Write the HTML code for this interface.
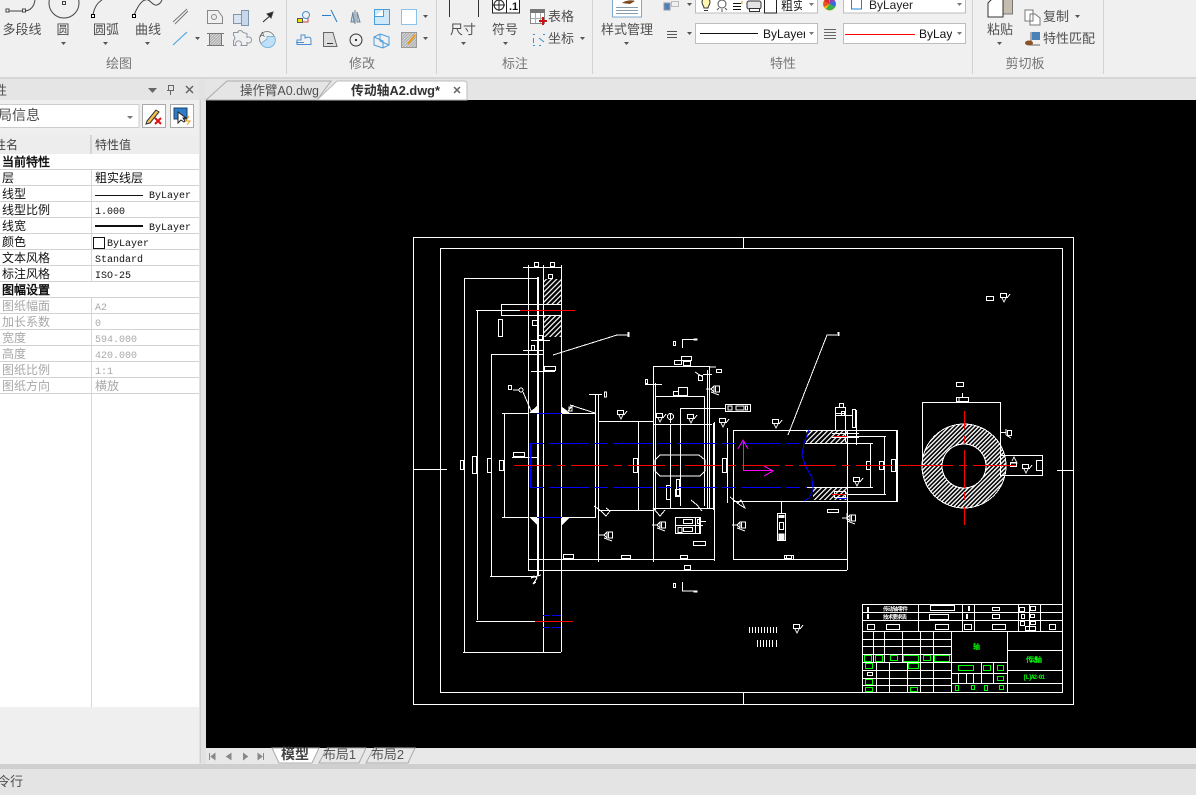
<!DOCTYPE html>
<html><head><meta charset="utf-8"><title>CAD</title>
<style>
html,body{margin:0;padding:0;background:#f0f0f0;width:1196px;height:795px;overflow:hidden}
svg{position:absolute;left:0;top:0;display:block}
.u{font-family:"Liberation Sans","Noto Sans CJK SC",sans-serif;font-size:13px;fill:#4f4f4f}
.g{font-family:"Liberation Sans","Noto Sans CJK SC",sans-serif;font-size:13px;fill:#767676}
.t{font-family:"Liberation Mono","WenQuanYi Zen Hei",monospace;font-size:12px;fill:#111}
.l{font-family:"Liberation Mono",monospace;font-size:10px;fill:#111}
.d{fill:#a8a8a8}
.c{text-anchor:middle}
</style></head><body>
<svg width="1196" height="795" viewBox="0 0 1196 795" xmlns="http://www.w3.org/2000/svg">
<defs>
<pattern id="h" width="3.6" height="3.6" patternUnits="userSpaceOnUse" patternTransform="rotate(-45)"><rect width="3.6" height="1.2" fill="#fff"/></pattern>
<pattern id="h2" width="3" height="3" patternUnits="userSpaceOnUse" patternTransform="rotate(-45)"><rect width="3" height="1.4" fill="#fff"/></pattern>
<pattern id="gh" width="2" height="2" patternUnits="userSpaceOnUse" patternTransform="rotate(-45)"><rect width="2" height="2" fill="#d8d8d8"/><rect width="2" height="1" fill="#aaa"/></pattern>
<g id="r" fill="none" stroke="#fff"><rect x="-4.500" y="-5.500" width="6" height="4"/><path d="M-3-1L-1 3L1-1M2-1L5-5"/></g>
<g id="s" fill="none" stroke="#fff"><path d="M-8 0H-3L0-3V3L-3 0M-3 3L5 6"/><rect x="1.500" y="-3" width="4" height="6"/></g>
</defs>
<!-- chrome backgrounds -->
<rect width="1196" height="77" fill="#f0f0f0"/>
<rect y="77" width="1196" height="2" fill="#d6d6d6"/>
<rect y="79" width="1196" height="686" fill="#e5e5e5"/>
<rect x="0" y="100" width="199" height="665" fill="#efefef"/>
<rect x="199" y="79" width="7" height="686" fill="#e2e2e2"/>
<rect x="200" y="100" width="1" height="663" fill="#d0d0d0"/>
<rect x="206" y="100" width="990" height="648" fill="#000"/>
<rect x="206" y="748" width="990" height="16" fill="#e8e8e8"/>
<rect y="764" width="1196" height="5" fill="#cfcfcf"/>
<rect y="769" width="1196" height="26" fill="#e4e4e4"/>
<text x="-3" y="786" class="u">令行</text>

<!-- ribbon separators -->
<g fill="#d2d2d2"><rect x="286" width="1" height="74"/><rect x="436" width="1" height="74"/><rect x="592" width="1" height="74"/><rect x="972" width="1" height="74"/><rect x="1103" width="1" height="74"/></g>

<!-- ribbon selects -->
<g fill="#fff" stroke="#bdbdbd"><rect x="695.500" y="-3" width="122" height="16"/><rect x="843.500" y="-3" width="122" height="16"/><rect x="695.500" y="23.500" width="122" height="20"/><rect x="843.500" y="23.500" width="122" height="20"/></g>

<!-- ribbon labels -->
<text x="119" y="68" class="g c">绘图</text><text x="362" y="68" class="g c">修改</text><text x="515" y="68" class="g c">标注</text><text x="783" y="68" class="g c">特性</text><text x="1025" y="68" class="g c">剪切板</text>
<text x="22" y="34" class="u c">多段线</text><text x="63" y="34" class="u c">圆</text><text x="106" y="34" class="u c">圆弧</text><text x="148" y="34" class="u c">曲线</text>
<text x="463" y="34" class="u c">尺寸</text><text x="505" y="34" class="u c">符号</text><text x="561" y="21" class="u c">表格</text><text x="561" y="43" class="u c">坐标</text>
<text x="627" y="34" class="u c">样式管理</text><text x="1000" y="34" class="u c">粘贴</text><text x="1056" y="21" class="u c">复制</text><text x="1069" y="43" class="u c">特性匹配</text>

<!-- ribbon arrows -->
<path fill="#555" d="M61 42h5l-2.500 3zM103 42h5l-2.500 3zM145 42h5l-2.500 3zM461 42h5l-2.500 3zM503 42h5l-2.500 3zM624 42h5l-2.500 3zM997 42h5l-2.500 3zM195 37h5l-2.500 3zM423 15h5l-2.500 3zM423 37h5l-2.500 3zM580 37h5l-2.500 3zM687 3h5l-2.500 3zM687 32h5l-2.500 3zM1075 15h5l-2.500 3z"/>
<path fill="#777" d="M809 32h5l-2.500 3zM809 3h5l-2.500 3zM957 32h5l-2.500 3zM957 3h5l-2.500 3z"/>

<!-- draw icons -->
<g fill="none" stroke="#444" stroke-width="1">
<path d="M8 11H24C30 11 34 7 35 0"/><rect x="6" y="9" width="3" height="3" fill="#fff"/><rect x="22.500" y="9" width="3" height="3" fill="#fff"/>
<circle cx="64" cy="3" r="15"/><rect x="62.500" y="1.500" width="3" height="3"/>
<path d="M93 15C94 9 97 3 102 0"/><rect x="91.500" y="14.500" width="3" height="3" stroke="#000" fill="#fff"/>
<path d="M134 15C137 8 141 1 145 0C150-2 152 6 157 5C160 4 161 2 162 0"/><rect x="132.500" y="14.500" width="3" height="3" stroke="#000" fill="#fff"/>
<path d="M173 22L187 9M175 24L188 11" stroke="#777"/>
<path d="M173 45L187 32" stroke="#3a9fe0"/>
<path d="M207.500 10.500H218L222.500 17V23.500H207.500Z" stroke="#888"/><circle cx="214" cy="17" r="2.500" stroke="#888"/>
<path d="M233.500 14.500H241.500V23.500H233.500Z" stroke="#7f96ad" fill="#d8e4f0"/><path d="M241.500 10.500H248.500V25.500H241.500Z" stroke="#7f96ad" fill="#c8d8ea"/>
<path d="M263 22L272 14" stroke="#222"/><path d="M267 14L273 12L271 18Z" fill="#222"/>
<rect x="209.500" y="33.500" width="12" height="12" stroke="#777" fill="url(#gh)"/>
<path d="M207 33.500H212M219 33.500H224M207 45.500H212M219 45.500H224" stroke="#777"/>
<path d="M238 31.500a3 3 0 0 1 5 1l4 1v4a3 3 0 1 1 0 5v3h-6a3 3 0 1 0-5 0h-2.500v-5a3 3 0 0 0 0-5v-3h4.500z" stroke="#8d97a3"/>
<circle cx="267" cy="39" r="7.500" stroke="#888"/><path d="M267 36.500H274.500A7.500 7.500 0 0 1 261 43.500L267 39Z" stroke="#7bb8de" fill="#bfe0f7"/>
<text x="260" y="37" style="font:7px 'Liberation Sans',sans-serif;fill:#555;stroke:none">A</text>
<!-- modify -->
<circle cx="306" cy="15" r="3.500" stroke="#4a8ed0"/><rect x="297.500" y="18.500" width="5" height="4" fill="#f2e400" stroke="#555"/><path d="M303 22H308V18" stroke="#c44"/>
<path d="M322 15.500H331M331 10L337 22" stroke="#2a7bc4"/>
<path d="M355 10V24M353 12L351 22H354ZM357 12L360 22H357Z" stroke="#6b8296" fill="#c9dbe9"/>
<rect x="374.500" y="9.500" width="15" height="15" stroke="#4a9ddd" fill="#cfe9fb"/><path d="M383.500 9.500V16.500H374.500" stroke="#4a9ddd" fill="#fff"/>
<rect x="401.500" y="9.500" width="15" height="15" stroke="#8cc2ea" fill="#fff"/>
<path d="M297 44.500H311V40C311 36 307 37 305 38V35H301V40H297ZM296 42.500H304" stroke="#4a8ed0"/>
<path d="M323.500 32.500H333L337 46.500H323.500Z" stroke="#666" fill="#ddd"/><path d="M327 43.500H333" stroke="#333"/>
<circle cx="356" cy="40" r="6" stroke="#333"/><rect x="355" y="39" width="2" height="2" fill="#333" stroke="none"/>
<path d="M374 37L380 34L389 37V45L383 48L374 45ZM380 34V41L389 45M374 37L383 41V48" stroke="#4a9ddd"/>
<rect x="401.500" y="32.500" width="15" height="15" stroke="#999" fill="url(#gh)"/><path d="M408 44L415 35" stroke="#e69a1a" stroke-width="2"/>
<!-- annotations -->
<path d="M449.500 0V17M478.500 0V17" stroke="#333"/>
<rect x="492.500" y="-1" width="27" height="14" stroke="#222" fill="#fff"/><path d="M506.500 0V13" stroke="#222"/><circle cx="499" cy="5" r="5" stroke="#222"/><path d="M499-1V11M493 5H505" stroke="#222"/>
<text x="509" y="10" style="font:bold 11px 'Liberation Sans',sans-serif;fill:#111;stroke:none">.1</text>
<rect x="530.500" y="9.500" width="14" height="14" stroke="#888" fill="#fff"/><rect x="530" y="9" width="15" height="4" fill="#777" stroke="none"/><path d="M535.500 13V23M540.500 13V23M531 18.500H544" stroke="#aaa"/><path d="M539 21H547M543 17V25" stroke="#c11" stroke-width="2"/>
<path d="M533 34.500H535M543 34.500H545M533 45.500H535M539 45.500H541M533.500 38V43M539 38L544 42" stroke="#3a90d0"/>
<rect x="612.500" y="-2" width="29" height="19" stroke="#7fa8cc" fill="#fff"/><path d="M616 7.500H638M616 10.500H638M616 13.500H638" stroke="#8899aa"/><path d="M622 3C626 0 632 0 635 1L630 4Z" fill="#7a4a20" stroke="none"/>
<!-- properties -->
<path d="M667 31.500H677M667 34.500H677M667 37.500H677" stroke="#555"/>
<rect x="664" y="3" width="6" height="7" fill="#4e7fb5" stroke="#99a"/><path d="M671.500 1.500H678.500V6.500H671.500Z" stroke="#bbb"/>
<path d="M702 2A4 4 0 1 1 710 2C710 5 708 6 708 8H704C704 6 702 5 702 2ZM704 10.500H708" stroke="#333" fill="#fff6b0"/>
<circle cx="722" cy="4" r="4" stroke="#555"/><path d="M717 10L719 8M727 10L725 8M722 9V12" stroke="#555"/>
<path d="M733 3.500H741M733 6.500H741M733 9.500H741" stroke="#111"/>
<path d="M742 1V4" stroke="#c90"/>
<rect x="747" y="1" width="14" height="8" rx="2" stroke="#333" fill="#e4e4e4"/><rect x="749.500" y="8.500" width="10" height="3" stroke="#333" fill="#fff"/>
<rect x="764.500" y="-2" width="12" height="15" stroke="#222" fill="#fff"/>
<circle cx="829.500" cy="4" r="6.500" fill="#f7b81c" stroke="none"/><path d="M829.500 4L824 1A6 6 0 0 1 829 -2Z" fill="#e3262a" stroke="none"/><path d="M829.500 4L830 -2A6 6 0 0 1 835 1Z" fill="#8a3fc4" stroke="none"/><path d="M829.500 4L835 1A6 6 0 0 1 835 7Z" fill="#2a6fdc" stroke="none"/><path d="M829.500 4L824 7A6 6 0 0 1 824 1Z" fill="#e8551a" stroke="none"/><path d="M829.500 4L835 7A6 6 0 0 1 826 9Z" fill="#34b34a" stroke="none"/>
<path d="M824 29.500H836M824 32.500H836M824 35.500H836M824 38.500H836" stroke="#666"/>
<!-- clipboard -->
<rect x="1000.500" y="-3" width="12" height="17" fill="#c5bdb0" stroke="#777"/><path d="M988 3L992 -1H1003V17H988Z" fill="#fff" stroke="#333"/>
<path d="M1025 10H1033V21H1025ZM1030 14H1035L1040 18V25H1030Z" stroke="#777" fill="#fff"/>
<rect x="1032" y="32" width="8" height="8" fill="#4a82b8" stroke="none"/><path d="M1031 32V45H1040" stroke="#666"/><ellipse cx="1029" cy="43" rx="4" ry="2.500" fill="#8a5226" stroke="none"/>
</g>

<svg x="781" y="-6" width="21" height="24"><text x="0" y="16" class="u" style="font-size:12px;fill:#222">粗实线层</text></svg>
<rect x="851.500" y="-3" width="10" height="12" fill="none" stroke="#1c84d8"/>
<text x="869" y="9" class="u" style="font-size:12px;fill:#222">ByLayer</text>
<rect x="700" y="33" width="58" height="1" fill="#111"/>
<svg x="763" y="24" width="42" height="20"><text x="0" y="14" class="u" style="font-size:12px;fill:#111">ByLayer</text></svg>
<rect x="845" y="34" width="70" height="1" fill="#f00"/>
<svg x="919" y="24" width="33" height="20"><text x="0" y="14" class="u" style="font-size:12px;fill:#111">ByLayer</text></svg>

<!-- panel header -->
<text x="-6" y="95" class="u">性</text>
<path d="M148 88h9l-4.500 5z" fill="#666"/>
<path d="M168.500 85.500h5v5h-5zM167 90.500h7M170.500 90v5" fill="none" stroke="#666"/>
<path d="M186 86l7 7M193 86l-7 7" stroke="#666" stroke-width="1.500"/>
<rect x="-2" y="104.500" width="141" height="23" fill="#fff" stroke="#ccc"/>
<text x="-2" y="120" class="u" style="font-size:14px">局信息</text>
<path d="M127 116h6l-3 3z" fill="#777"/>
<rect x="142.500" y="104.500" width="23" height="23" fill="#fff" stroke="#aaa"/>
<path d="M147 121L156 110L159 112L150 123L146 124Z" fill="#f3c04c" stroke="#333"/><path d="M155 118l6 6M161 118l-6 6" stroke="#d11" stroke-width="2"/>
<rect x="170.500" y="104.500" width="23" height="23" fill="#fff" stroke="#aaa"/>
<rect x="174" y="108" width="13" height="11" fill="#2f7cc6" stroke="#14426e"/><path d="M178 112L178 123L181 120L184 122L185 121L183 118H186Z" fill="#fff" stroke="#222"/><path d="M189 116L186 121H190L187 125" stroke="#e69a1a" fill="none"/>

<!-- property table -->
<rect x="0" y="135" width="199" height="572" fill="#fff"/>
<rect x="0" y="135" width="199" height="19" fill="#ededed"/>
<rect x="90" y="135" width="2" height="19" fill="#d5d5d5"/>
<rect x="91" y="154" width="1" height="553" fill="#d8d8d8"/>
<g fill="#d2d2d2"><rect y="169" width="199" height="1"/><rect y="185" width="199" height="1"/><rect y="201" width="199" height="1"/><rect y="217" width="199" height="1"/><rect y="233" width="199" height="1"/><rect y="249" width="199" height="1"/><rect y="265" width="199" height="1"/><rect y="281" width="199" height="1"/><rect y="297" width="199" height="1"/><rect y="313" width="199" height="1"/><rect y="329" width="199" height="1"/><rect y="345" width="199" height="1"/><rect y="361" width="199" height="1"/><rect y="377" width="199" height="1"/><rect y="393" width="199" height="1"/></g>
<rect x="91" y="154" width="108" height="15" fill="#fff"/>
<rect x="91" y="282" width="108" height="15" fill="#fff"/>
<text x="-6" y="149" class="t" style="fill:#444">性名</text><text x="95" y="149" class="t" style="fill:#444">特性值</text>
<text x="2" y="166" class="t" style="font-weight:bold">当前特性</text>
<text x="2" y="182" class="t">层</text><text x="95" y="182" class="t">粗实线层</text>
<text x="2" y="198" class="t">线型</text><rect x="95" y="195" width="48" height="1" fill="#111"/><text x="149" y="198" class="l">ByLayer</text>
<text x="2" y="214" class="t">线型比例</text><text x="95" y="214" class="l">1.000</text>
<text x="2" y="230" class="t">线宽</text><rect x="95" y="225" width="48" height="2" fill="#111"/><text x="149" y="230" class="l">ByLayer</text>
<text x="2" y="246" class="t">颜色</text><rect x="93.500" y="237.500" width="11" height="11" fill="#fff" stroke="#111"/><text x="107" y="246" class="l">ByLayer</text>
<text x="2" y="262" class="t">文本风格</text><text x="95" y="262" class="l">Standard</text>
<text x="2" y="278" class="t">标注风格</text><text x="95" y="278" class="l">ISO-25</text>
<text x="2" y="294" class="t" style="font-weight:bold">图幅设置</text>
<text x="2" y="310" class="t d">图纸幅面</text><text x="95" y="310" class="l d">A2</text>
<text x="2" y="326" class="t d">加长系数</text><text x="95" y="326" class="l d">0</text>
<text x="2" y="342" class="t d">宽度</text><text x="95" y="342" class="l d">594.000</text>
<text x="2" y="358" class="t d">高度</text><text x="95" y="358" class="l d">420.000</text>
<text x="2" y="374" class="t d">图纸比例</text><text x="95" y="374" class="l d">1:1</text>
<text x="2" y="390" class="t d">图纸方向</text><text x="95" y="390" class="t d">横放</text>

<!-- doc tabs -->
<path d="M206 100L227 81H331L317 100Z" fill="#e5e5e5" stroke="#aaa"/>
<path d="M317 100L337 81H464Q467 81 467 84V100Z" fill="#fff" stroke="#bbb"/>
<text x="240" y="95" class="u" textLength="79" lengthAdjust="spacingAndGlyphs">操作臂A0.dwg</text>
<text x="351" y="95" class="u" style="font-weight:bold;fill:#333" textLength="89" lengthAdjust="spacingAndGlyphs">传动轴A2.dwg*</text>
<path d="M454 87l6 6M460 87l-6 6" stroke="#666" stroke-width="1.500"/>

<!-- layout tabs -->
<path d="M272 748L279 763H312L319 748Z" fill="#fff" stroke="#aaa"/>
<path d="M319 763L327 748H366L359 763ZM366 763L374 748H415L408 763Z" fill="#e8e8e8" stroke="#aaa"/>
<text x="295" y="759" class="u c" style="font-weight:bold;fill:#444;font-size:14px">模型</text>
<text x="339.500" y="759" class="u c" style="fill:#555" textLength="33" lengthAdjust="spacingAndGlyphs">布局1</text>
<text x="387.500" y="759" class="u c" style="fill:#555" textLength="33" lengthAdjust="spacingAndGlyphs">布局2</text>
<path d="M209.500 753V760M215 753.500L211 756.500L215 759.500ZM231 753.500L226.500 756.500L231 759.500ZM243.500 753.500L247.500 756.500L243.500 759.500ZM258 753.500L262 756.500L258 759.500ZM263.500 753V760" fill="#888" stroke="#888"/>

<!-- DRAWING -->
<g shape-rendering="crispEdges">
<rect x="543" y="279" width="18" height="25" fill="url(#h)"/><rect x="543" y="316" width="18" height="21" fill="url(#h)"/>
<rect x="806" y="431" width="41" height="12" fill="url(#h)"/><rect x="813" y="488" width="34" height="12" fill="url(#h)"/>
<path fill-rule="evenodd" fill="url(#h2)" d="M922 466a42 42 0 1 0 84 0a42 42 0 1 0-84 0ZM942 466a22 22 0 1 1 44 0a22 22 0 1 1-44 0Z"/>

<g fill="none" stroke="#fff" stroke-width="1">
<rect x="413.500" y="237.500" width="660" height="467"/><rect x="440.500" y="248.500" width="622" height="444"/>
<path d="M743.500 237V248M743.500 692V704M413 469.500H447M1057 470.500H1073"/>
<!-- left section -->
<path d="M528.500 265V570M543.500 265V652M561.500 265V652M523 267.500H561M464.500 278V652M464 278.500H539M463 652.500H561M477.500 311V620M476 310.500H520M476 621.500H535"/>
<path d="M491.500 354V576M491 354.500H543M490 576.500H535M504.500 413V517M502 413.500H528M561 413.500H596M502 517.500H528M561 517.500H596"/>
<path d="M501 304.500H561M501 315.500H561M501.500 304V315"/>
<rect x="498.500" y="319.500" width="4" height="17"/>
<path d="M531 340.500H550M523 350.500H543M531 371.500H555"/>
<rect x="544.500" y="366.500" width="11" height="4"/><rect x="534.500" y="262.500" width="4" height="4"/><rect x="550.500" y="262.500" width="4" height="4"/><rect x="548.500" y="274.500" width="4" height="4"/><rect x="538.500" y="335.500" width="4" height="4"/><rect x="531.500" y="345.500" width="3" height="5"/><rect x="532.500" y="320.500" width="5" height="5"/>
<path d="M553 355L617 335H628"/><path d="M628.500 332V337" stroke-width="2"/>
<circle cx="521" cy="390" r="2"/><path d="M513 390H519M523 392L532 413"/><rect x="508.500" y="385.500" width="3" height="4"/>
<path d="M570 405L595 413M568 411L573 405"/><rect x="569" y="407" width="3" height="4"/>
<path d="M589 394.500H602M595.500 395V517M598.500 395V562"/><rect x="604.500" y="392" width="2" height="5"/>
<path d="M598 421.500H653M598 510.500H653M638.500 421V510"/>
<path d="M653.500 366V562M653 366.500H709M707.500 370V508M709.500 366V508M655.500 383V510M655 396.500H704M704.500 396V506"/>
<path d="M655 465V460L660 455H699L705 460V471L700 476H660L655 471Z"/>
<path d="M653 424.500H712M670.500 424V508M680.500 408V506M680 408.500H722M653 508.500H714M713.500 423V510M714.500 422V561"/>
<path d="M528 559.500H714M528 570.500H847M847.500 430V570M727.500 428V503M733.500 430V560M733 430.500H898M733 501.500H898M733 559.500H847"/>
<path d="M897.500 430V501M805 443.500H873M807 487.500H873M870.500 443V487M847 436.500H886M884.500 436V494M847 494.500H886"/>
<path d="M788 435L827 335H837"/><path d="M838.500 332V336" stroke-width="2"/>
<path d="M709 367H716"/>
<!-- small rects on the shaft -->
<rect x="460.500" y="460.500" width="3" height="9"/><rect x="472.500" y="456.500" width="4" height="17"/><rect x="487.500" y="458.500" width="4" height="14"/><rect x="499.500" y="460.500" width="4" height="10"/>
<rect x="633.500" y="458.500" width="4" height="14"/><rect x="666.500" y="485.500" width="4" height="14"/><rect x="676.500" y="479.500" width="3" height="16"/><rect x="675.500" y="489.500" width="4" height="7"/>
<rect x="513.500" y="452.500" width="11" height="4"/><path d="M512 457.500H537"/>
<rect x="722.500" y="458.500" width="4" height="14"/>
<rect x="866.500" y="461.500" width="4" height="8"/><rect x="879.500" y="461.500" width="4" height="8"/><rect x="891.500" y="459.500" width="4" height="12"/>
<!-- dim markers -->
<rect x="563.500" y="554.500" width="10" height="4"/><rect x="621.500" y="555.500" width="9" height="3"/><rect x="680.500" y="555.500" width="7" height="3"/><rect x="784.500" y="555.500" width="7" height="3"/><rect x="684.500" y="565.500" width="6" height="4"/>
<rect x="673.500" y="341.500" width="2" height="4"/><path d="M682.500 339V348M682 339.500H696"/><rect x="694" y="339" width="3" height="1"/>
<rect x="674.500" y="360.500" width="7" height="4"/><rect x="681.500" y="356.500" width="10" height="4"/><rect x="683.500" y="361.500" width="7" height="4"/>
<rect x="645.500" y="379.500" width="2" height="4"/><path d="M645 384.500H662"/><rect x="673.500" y="391.500" width="5" height="4"/><rect x="678.500" y="387.500" width="9" height="8"/>
<rect x="698.500" y="375.500" width="4" height="5"/><path d="M695 372L703 377M703 374.500H712"/><rect x="716.500" y="369.500" width="5" height="3"/>
<rect x="725.500" y="404.500" width="25" height="7"/><rect x="728" y="406" width="4" height="4"/><rect x="736" y="406" width="8" height="4"/><path d="M704 408.500H725"/>
<rect x="745.500" y="406" width="2" height="4"/>
<rect x="675.500" y="517.500" width="25" height="16"/><path d="M675 525.500H703M695.500 517V533M699.500 517V533"/>
<rect x="683.500" y="519.500" width="9" height="4"/><rect x="683.500" y="527.500" width="9" height="4"/><rect x="697.500" y="519.500" width="2" height="4"/><rect x="678" y="527.500" width="4" height="5"/>
<path d="M701 521.500H706"/>
<rect x="693.500" y="541.500" width="12" height="4"/>
<rect x="673.500" y="583.500" width="2" height="4"/><path d="M682.500 582V591H696"/><rect x="694" y="591" width="3" height="1"/>
<circle cx="670.500" cy="416.500" r="3"/><path d="M670.500 413V423"/>
<!-- right part -->
<path d="M781.500 501V514"/>
<rect x="777.500" y="513.500" width="8" height="27"/><rect x="779.500" y="522.500" width="4" height="7"/><rect x="779" y="515.500" width="5" height="2" fill="#fff"/><rect x="779" y="534" width="5" height="6" fill="#fff"/>
<rect x="827.500" y="509.500" width="11" height="3"/><rect x="786.500" y="555.500" width="7" height="4"/>
<rect x="835.500" y="407.500" width="10" height="6"/><rect x="839.500" y="403.500" width="4" height="4"/><rect x="841.500" y="411.500" width="3" height="4"/><rect x="852.500" y="409.500" width="3" height="18"/><path d="M835 415.500H853M835.500 408V431M845.500 408V442M856.500 410V445"/>
<path d="M832 433.500H859M832 437.500H859"/>
<rect x="834.500" y="491.500" width="11" height="6"/>
<path d="M847 513V520"/>
<!-- section view -->
<circle cx="964" cy="466" r="42"/><circle cx="964" cy="466" r="22"/>
<path d="M922.500 402V466M1000.500 402V475M922 402.500H1001M1000 455.500H1043M1000 475.500H1043M1042.500 455V476"/>
<rect x="1036.500" y="460.500" width="6" height="10"/><rect x="956.500" y="382.500" width="7" height="4"/><rect x="956.500" y="397.500" width="12" height="4"/><path d="M962.500 393V397M959 397V401"/>
<rect x="1007.500" y="430.500" width="4" height="5"/>
<path d="M1001 432.500H1006M1006 429V435M1006 435L1011 438"/>
<path d="M1010 463H1017L1014 457L1012 461"/><rect x="1010.500" y="462.500" width="6" height="4"/>
<rect x="986.500" y="296.500" width="7" height="4"/>
<!-- roughness marks -->
<path d="M749.500 627V633M752.500 627V633M755.500 627V633M758.500 627V633M761.500 627V633M764.500 627V633M767.500 627V633M770.500 627V633M773.500 627V633M776.500 627V633M757.500 640V647M760.500 640V647M763.500 640V647M766.500 640V647M769.500 640V647M772.500 640V647M776.500 640V647"/>
</g>
<use href="#r" x="622" y="416"/><use href="#r" x="661" y="419"/><use href="#r" x="692" y="420"/><use href="#r" x="1005" y="299"/><use href="#r" x="798" y="630"/><use href="#r" x="777" y="425"/><use href="#r" x="858" y="483"/><use href="#r" x="1027" y="470"/><use href="#r" x="724" y="424"/>
<use href="#s" x="607" y="535"/><use href="#s" x="660" y="525"/><use href="#s" x="740" y="525"/><use href="#s" x="850" y="518"/><use href="#s" x="714" y="389"/>
<g fill="none" stroke="#fff"><path d="M594 506L601 511L606 516L610 511L606 508M653 508L660 516L665 510M691 500L697 505L702 511M730 497L740 505L745 508L741 500L737 504M536 582L533 584L537 578L534 576L531 578L541 575"/></g>

<!-- thick -->
<rect x="537" y="277" width="2" height="299" fill="#fff"/>
<rect x="896" y="430" width="2" height="72" fill="#fff"/>
<!-- triangles -->
<path d="M529 413L538 405V413ZM561 406V413H570ZM529 517H538V526ZM561 517V526L570 517Z" fill="#fff"/>

<!-- blue -->
<g fill="none" stroke="#0000ff">
<path d="M537 413.500H562M537 517.500H562"/>
<path d="M530 443.500H805M530 487.500H807" stroke-dasharray="14 5 40 5"/>
<path d="M530.500 443V487" stroke-width="2"/>
<path d="M809 430L804 443L802 455L805 465L812 478L813 490L809 498L804 501"/>
<path d="M543 615.500H561M543 627.500H561" stroke-dasharray="7 2 9 0"/>
<path d="M837 498.500H847"/>
</g>
<!-- red -->
<g fill="none" stroke="#f00">
<path d="M520 310.500H575M535 621.500H573"/>
<path d="M514 465.500H908" stroke-dasharray="37 6 8 6"/>
<path d="M833 436.500H847M832 494.500H846"/>
<path d="M964.500 411V429M964.500 436V443M964.500 450V488M964.500 492V500M964.500 507V525M908 465.500H953M959 465.500H967M973 465.500H1016"/>
</g>
<!-- magenta -->
<g fill="none" stroke="#ff00ff"><path d="M743.500 441V471M743 470.500H773M738 449L743 440L748 449M764 466L773 471L764 476"/></g>

<!-- title block -->
<g fill="none" stroke="#fff">
<path d="M862 604.500H1062M862 612.500H1062M862 620.500H1062M862 631.500H1062M862.500 604V692M918.500 604V631M962.500 604V631M974.500 604V631M1018.500 604V631M1029.500 604V631M1040.500 604V631"/>
<path d="M862 639.500H951M862 646.500H951M862 654.500H951M862 662.500H951M862 670.500H951M862 678.500H951M862 685.500H951"/>
<path d="M873.500 631V662M884.500 631V662M902.500 631V662M920.500 631V692M933.500 631V692M876.500 662V692M889.500 662V692M907.500 662V692M951.500 631V692"/>
<path d="M952 662.500H1007M952 673.500H1007M952 683.500H1007M981.500 662V683M993.500 662V683M958.500 673V683M966.500 673V683M973.500 673V683M1007.500 631V692M1007 650.500H1062M1007 670.500H1062M1007 683.500H1062"/>
<rect x="930.500" y="605.500" width="24" height="5"/><rect x="929.500" y="614.500" width="19" height="5"/><rect x="867.500" y="624.500" width="7" height="5"/><rect x="886.500" y="624.500" width="13" height="5"/><rect x="935.500" y="624.500" width="13" height="5"/><rect x="964.500" y="624.500" width="7" height="5"/><rect x="992.500" y="624.500" width="13" height="5"/><rect x="1049.500" y="624.500" width="6" height="5"/>
<rect x="992.500" y="607.500" width="7" height="3"/><rect x="992.500" y="614.500" width="7" height="4"/><rect x="1019.500" y="607.500" width="5" height="4"/><rect x="1021.500" y="614.500" width="3" height="4"/><rect x="1020.500" y="621.500" width="4" height="4"/><rect x="1030.500" y="606.500" width="5" height="4"/><rect x="1030.500" y="614.500" width="4" height="3"/><rect x="1030.500" y="621.500" width="5" height="3"/><rect x="1025.500" y="626.500" width="10" height="4"/>
<rect x="867.500" y="672.500" width="5" height="3"/>
</g>
<g fill="#fff"><rect x="867" y="607" width="2" height="5"/><rect x="867" y="614" width="2" height="5"/><rect x="968" y="606" width="2" height="5"/><rect x="966" y="614" width="2" height="5"/></g>
<text x="883" y="611" style="font:bold 5.500px 'Liberation Sans','Noto Sans CJK SC',sans-serif;fill:#fff" textLength="25">传动轴零件</text>
<text x="883" y="619" style="font:bold 5.500px 'Liberation Sans','Noto Sans CJK SC',sans-serif;fill:#fff" textLength="24">技术要求表</text>
<g fill="none" stroke="#0f0">
<rect x="864.500" y="655.500" width="7" height="6"/><rect x="875.500" y="655.500" width="7" height="6"/><rect x="890.500" y="655.500" width="7" height="5"/><rect x="903.500" y="655.500" width="15" height="6"/><rect x="923.500" y="655.500" width="7" height="5"/><rect x="934.500" y="655.500" width="15" height="6"/>
<rect x="865.500" y="663.500" width="7" height="5"/><rect x="908.500" y="663.500" width="10" height="5"/><rect x="865.500" y="679.500" width="7" height="5"/><rect x="865.500" y="687.500" width="7" height="4"/><rect x="910.500" y="687.500" width="7" height="4"/>
<rect x="958.500" y="665.500" width="15" height="5"/><rect x="983.500" y="665.500" width="7" height="5"/><rect x="997.500" y="665.500" width="6" height="5"/><rect x="997.500" y="676.500" width="6" height="4"/>
<rect x="955.500" y="685.500" width="3" height="5"/><rect x="971.500" y="685.500" width="3" height="4"/><rect x="984.500" y="685.500" width="3" height="5"/><rect x="999.500" y="685.500" width="4" height="4"/>
</g>
<text x="973" y="649" style="font:bold 7px 'Liberation Sans','Noto Sans CJK SC',sans-serif;fill:#0f0">轴</text>
<text x="1026" y="662" style="font:bold 7px 'Liberation Sans','Noto Sans CJK SC',sans-serif;fill:#0f0" textLength="16">传动轴</text>
<text x="1023" y="679" style="font:bold 6px 'Liberation Mono','Noto Sans CJK SC',monospace;fill:#0f0" textLength="22">[L]A2-01</text>
</g>
</svg>
</body></html>
